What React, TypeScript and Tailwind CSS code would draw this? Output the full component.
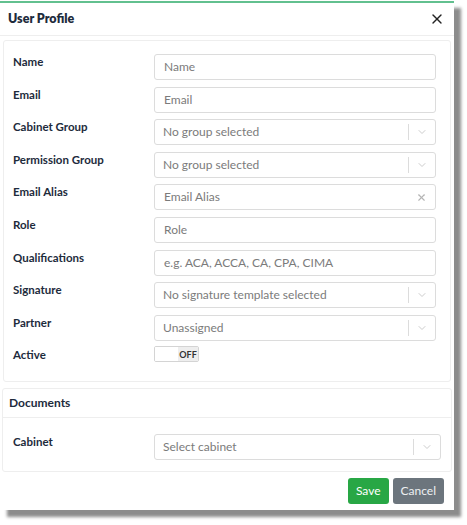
import { X, ChevronDown } from 'lucide-react'

const font = { fontFamily: 'Lato, "Open Sans", sans-serif' }

function TextInput({ placeholder, clearable }: { placeholder: string; clearable?: boolean }) {
  return (
    <div className="h-[26px] flex items-center border border-[#dcdcdc] rounded-[3px] bg-white pl-[9px] pr-[8px]">
      <span className="flex-1 text-[12px] text-[#7b7b7b] truncate">{placeholder}</span>
      {clearable && <X className="w-[11px] h-[11px] text-[#b5b5b5]" strokeWidth={2.5} />}
    </div>
  )
}

function SelectInput({ placeholder }: { placeholder: string }) {
  return (
    <div className="h-[26px] flex items-center border border-[#dcdcdc] rounded-[3px] bg-white pl-[8px]">
      <span className="flex-1 text-[12px] text-[#7b7b7b] truncate">{placeholder}</span>
      <span className="w-px h-[16px] bg-[#dcdcdc]" />
      <span className="w-[26px] flex items-center justify-center">
        <ChevronDown className="w-[12px] h-[12px] text-[#bbbbbb]" strokeWidth={1.5} />
      </span>
    </div>
  )
}

function Row({ label, children }: { label: string; children: React.ReactNode }) {
  return (
    <div className="flex">
      <div className="w-[141px] pt-[1px] text-[11.5px] font-bold text-[#1d2b3c] leading-[14px]">{label}</div>
      <div className="flex-1">{children}</div>
    </div>
  )
}

export default function App() {
  return (
    <div className="w-[467px] h-[525px] bg-white" style={font}>
      <div className="w-[454px] pt-[1px]">
        <div className="border-t-2 border-[#62c08f] bg-white shadow-[7px_7px_3px_rgba(0,0,0,0.45)] pb-[6px]">
          {/* header */}
          <div className="h-[33px] flex items-center justify-between pl-[8px] pr-[9px] border-b border-[#eeeeee]">
            <span className="text-[12.5px] font-extrabold text-[#1d2b3c]">User Profile</span>
            <X className="w-[16px] h-[16px] text-[#222]" strokeWidth={2} />
          </div>

          {/* profile panel */}
          <div className="mx-[3px] mt-[4px] border border-[#eeeeee] rounded-[3px] pl-[9px] pr-[14px] pt-[13px] pb-[19px] flex flex-col gap-[6.6px]">
            <Row label="Name"><TextInput placeholder="Name" /></Row>
            <Row label="Email"><TextInput placeholder="Email" /></Row>
            <Row label="Cabinet Group"><SelectInput placeholder="No group selected" /></Row>
            <Row label="Permission Group"><SelectInput placeholder="No group selected" /></Row>
            <Row label="Email Alias"><TextInput placeholder="Email Alias" clearable /></Row>
            <Row label="Role"><TextInput placeholder="Role" /></Row>
            <Row label="Qualifications"><TextInput placeholder="e.g. ACA, ACCA, CA, CPA, CIMA" /></Row>
            <Row label="Signature"><SelectInput placeholder="No signature template selected" /></Row>
            <Row label="Partner"><SelectInput placeholder="Unassigned" /></Row>
            <Row label="Active">
              <div className="mt-[-1px] w-[45px] h-[16px] flex border border-[#d4d4d4] rounded-[2px] overflow-hidden">
                <div className="flex-1 bg-white" />
                <div className="w-[20px] bg-[#eeeeee] flex items-center justify-center text-[9px] font-bold text-[#333]">OFF</div>
              </div>
            </Row>
          </div>

          {/* documents panel */}
          <div className="mx-[2px] mt-[6px] border border-[#eeeeee] rounded-[3px]">
            <div className="h-[29px] flex items-center px-[6px] border-b border-[#eeeeee] text-[12px] font-bold text-[#1d2b3c]">
              Documents
            </div>
            <div className="pl-[10px] pr-[10px] pt-[16px] pb-[11px]">
              <Row label="Cabinet"><SelectInput placeholder="Select cabinet" /></Row>
            </div>
          </div>

          {/* footer */}
          <div className="flex justify-end gap-[4px] pr-[10px] pt-[6px]">
            <button className="h-[26px] px-[8px] rounded-[3px] bg-[#28a745] text-white text-[12px]">Save</button>
            <button className="h-[26px] px-[8px] rounded-[3px] bg-[#6c757d] text-[#eef0f2] text-[12px]">Cancel</button>
          </div>
        </div>
      </div>
    </div>
  )
}
